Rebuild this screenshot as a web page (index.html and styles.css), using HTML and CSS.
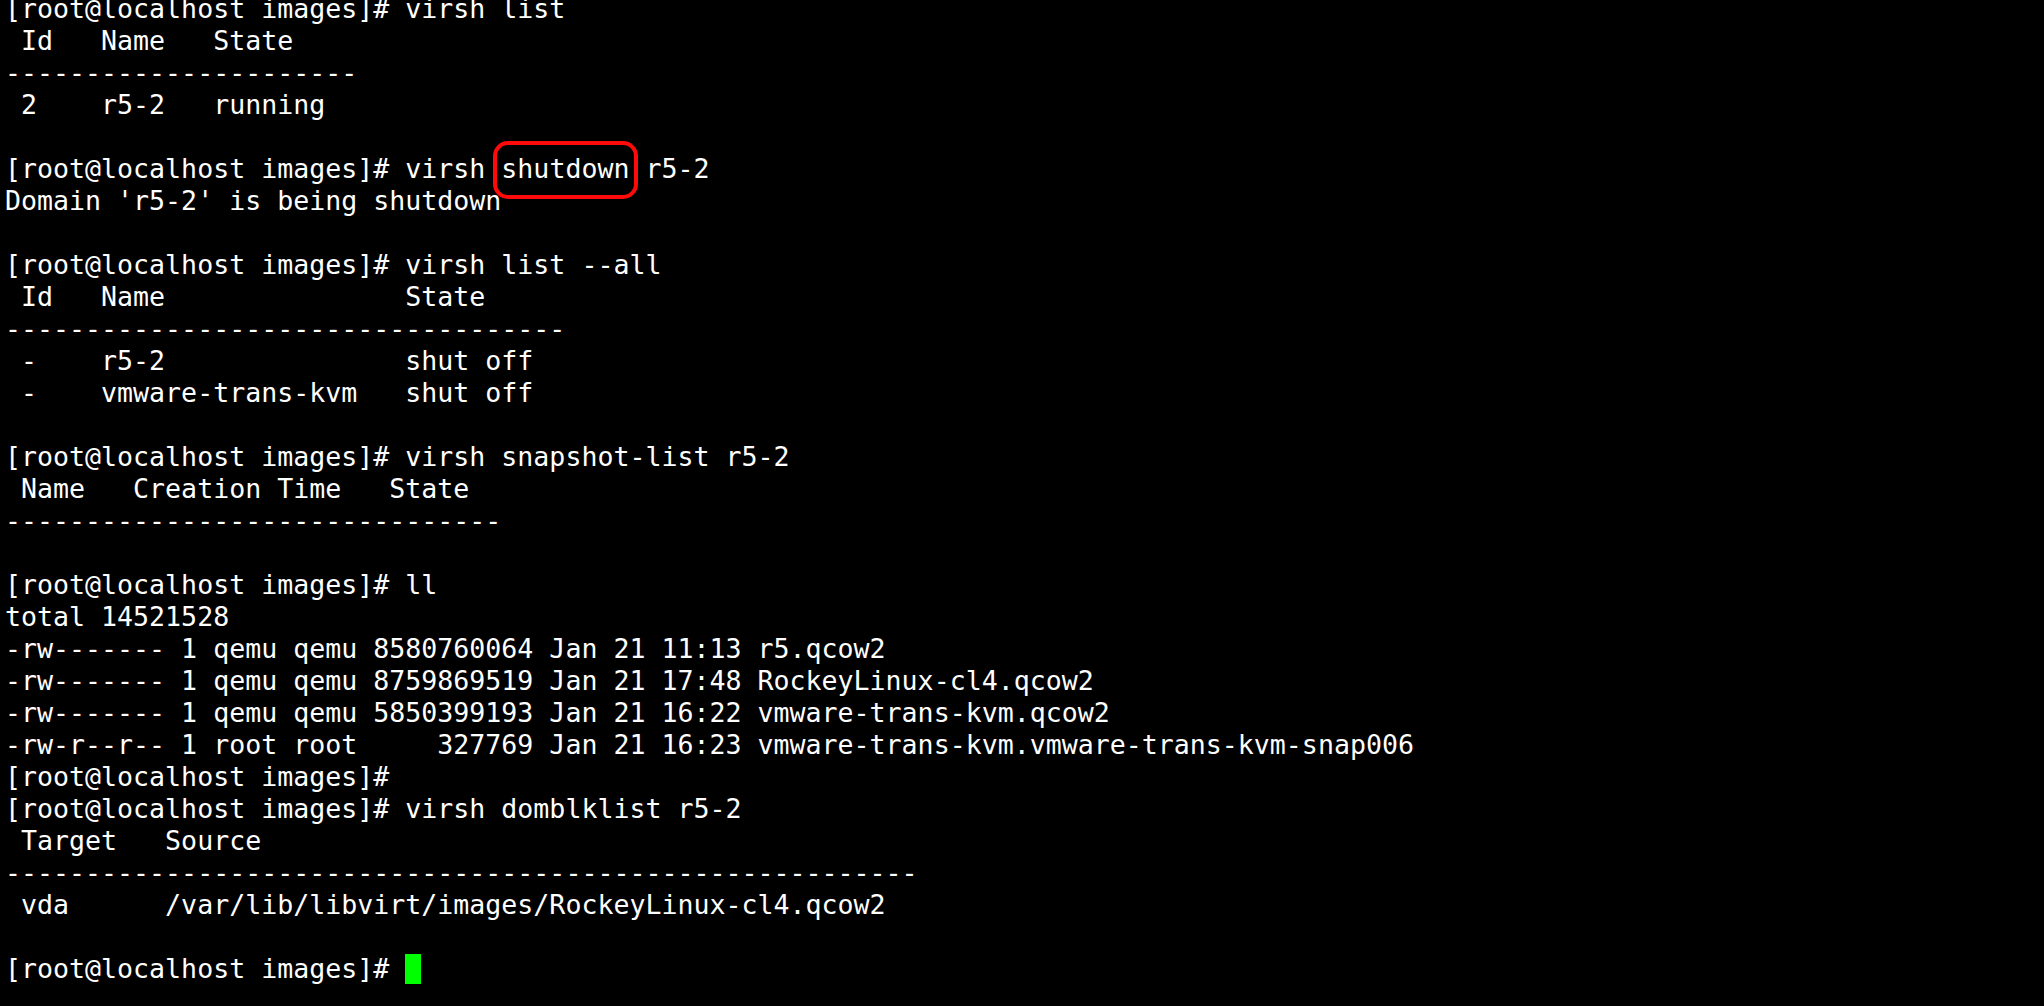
FILE: index.html
```html
<!DOCTYPE html>
<html>
<head>
<meta charset="utf-8">
<link rel="stylesheet" href="styles.css">
</head>
<body>
<pre class="term">[root@localhost images]# virsh list
 Id   Name   State
----------------------
 2    r5-2   running

[root@localhost images]# virsh <span class="mark">shutdown</span> r5-2
Domain 'r5-2' is being shutdown

[root@localhost images]# virsh list --all
 Id   Name               State
-----------------------------------
 -    r5-2               shut off
 -    vmware-trans-kvm   shut off

[root@localhost images]# virsh snapshot-list r5-2
 Name   Creation Time   State
-------------------------------

[root@localhost images]# ll
total 14521528
-rw------- 1 qemu qemu 8580760064 Jan 21 11:13 r5.qcow2
-rw------- 1 qemu qemu 8759869519 Jan 21 17:48 RockeyLinux-cl4.qcow2
-rw------- 1 qemu qemu 5850399193 Jan 21 16:22 vmware-trans-kvm.qcow2
-rw-r--r-- 1 root root     327769 Jan 21 16:23 vmware-trans-kvm.vmware-trans-kvm-snap006
[root@localhost images]#
[root@localhost images]# virsh domblklist r5-2
 Target   Source
---------------------------------------------------------
 vda      /var/lib/libvirt/images/RockeyLinux-cl4.qcow2

[root@localhost images]# <span class="cursor"></span></pre>
</body>
</html>
```
FILE: styles.css
```css
html, body {
  margin: 0;
  padding: 0;
  background: #000000;
  height: 100%;
  overflow: hidden;
}
.term {
  margin: -7px 0 0 5px;
  font-family: "DejaVu Sans Mono", "Liberation Mono", monospace;
  font-size: 26.6px;
  line-height: 32px;
  color: #ffffff;
  white-space: pre;
}
.mark {
  position: relative;
}
.mark::after {
  content: "";
  position: absolute;
  left: -8px;
  right: -9px;
  top: -12px;
  bottom: -15px;
  border: 4px solid #ff0a0a;
  border-radius: 15px;
}
.cursor {
  display: inline-block;
  vertical-align: top;
  width: 16px;
  height: 30px;
  margin-top: 1px;
  background: #00ff00;
}
```
